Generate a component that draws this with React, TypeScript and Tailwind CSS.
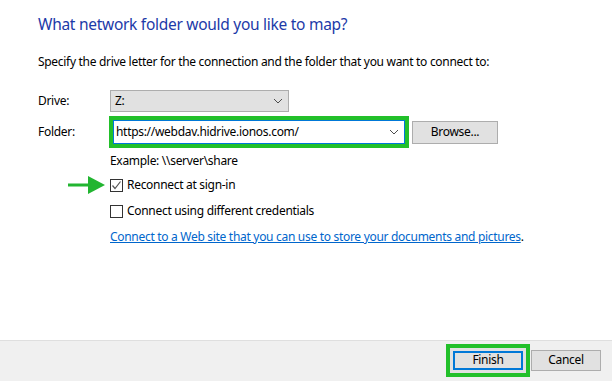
import React from "react";

function Chevron() {
  return (
    <svg width="10" height="6" viewBox="0 0 10 6" className="shrink-0">
      <path d="M1 1 L5 5 L9 1" fill="none" stroke="#4d4d4d" strokeWidth="1" />
    </svg>
  );
}

function Checkbox({ checked }: { checked?: boolean }) {
  return (
    <div className="flex h-[13px] w-[13px] shrink-0 items-center justify-center border border-[#333333] bg-white">
      {checked && (
        <svg width="11" height="11" viewBox="0 0 11 11">
          <path d="M1.5 5.5 L4 8.5 L9.5 1.5" fill="none" stroke="#555555" strokeWidth="1.2" />
        </svg>
      )}
    </div>
  );
}

function GreenArrow() {
  return (
    <svg width="38" height="18" viewBox="0 0 38 18" className="absolute left-[68px] top-[176px]">
      <rect x="0" y="7.5" width="22" height="3" fill="#22b531" />
      <path d="M20 0 L37 9 L20 18 Z" fill="#22b531" />
    </svg>
  );
}

export default function App() {
  return (
    <div
      className="flex h-[381px] w-[612px] flex-col bg-white text-[12px] tracking-[-0.3px] text-black"
      style={{ fontFamily: '"Segoe UI", "Noto Sans", "Liberation Sans", sans-serif' }}
    >
      <div className="relative flex-1 pl-[38px] pt-[14px]">
        <h1 className="text-[15.5px] leading-[21px] tracking-[-0.28px] text-[#1c3aa8]">
          What network folder would you like to map?
        </h1>
        <p className="mt-[19px] leading-[16px]">
          Specify the drive letter for the connection and the folder that you want to connect to:
        </p>

        <div className="mt-[20px] flex items-center">
          <span className="w-[72px]">Drive:</span>
          <div className="flex h-[22px] w-[179px] items-center justify-between border border-[#adadad] bg-[#e1e1e1] pl-[4px] pr-[5px]">
            <span>Z:</span>
            <Chevron />
          </div>
        </div>

        <div className="mt-[4px] flex items-center">
          <span className="w-[71px]">Folder:</span>
          <div className="border-4 border-[#22c02a]">
            <div className="flex h-[24px] w-[292px] items-center justify-between border border-[#0078d7] bg-white pl-[2px] pr-[5px]">
              <span>https://webdav.hidrive.ionos.com/</span>
              <Chevron />
            </div>
          </div>
          <button className="ml-[3px] flex h-[23px] w-[86px] items-center justify-center border border-[#adadad] bg-[#e1e1e1]">
            Browse...
          </button>
        </div>

        <div className="ml-[72px] mt-[5px] leading-[16px]">Example: \\server\share</div>

        <div className="ml-[72px] mt-[8px] flex items-center gap-[4px] leading-[16px]">
          <Checkbox checked />
          <span>Reconnect at sign-in</span>
        </div>

        <div className="ml-[72px] mt-[10px] flex items-center gap-[4px] leading-[16px]">
          <Checkbox />
          <span>Connect using different credentials</span>
        </div>

        <div className="ml-[72px] mt-[10px] leading-[16px]">
          <span className="text-[#0066cc] underline">
            Connect to a Web site that you can use to store your documents and pictures
          </span>
          .
        </div>

        <GreenArrow />
      </div>

      <div className="flex h-[41px] items-center justify-end border-t border-[#dfdfdf] bg-[#f0f0f0] pb-[2px] pr-[11px]">
        <div className="border-4 border-[#22c02a] bg-[#e1e1e1] p-[3px]">
          <div className="flex h-[19px] w-[70px] items-center justify-center border-2 border-[#0078d7]">Finish</div>
        </div>
        <button className="ml-[1px] flex h-[21px] w-[70px] items-center justify-center border border-[#adadad] bg-[#e1e1e1]">
          Cancel
        </button>
      </div>
    </div>
  );
}
